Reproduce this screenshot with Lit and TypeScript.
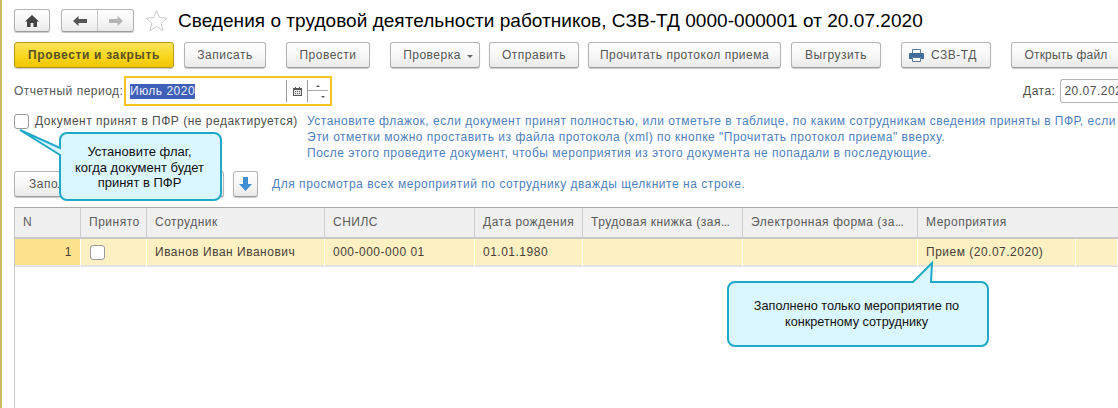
import { LitElement, html, css } from 'lit';
import { customElement } from 'lit/decorators.js';

const columns = [
  { title: 'N', cell: '1' },
  { title: 'Принято', cell: '' },
  { title: 'Сотрудник', cell: 'Иванов Иван Иванович' },
  { title: 'СНИЛС', cell: '000-000-000 01' },
  { title: 'Дата рождения', cell: '01.01.1980' },
  { title: 'Трудовая книжка (зая', more: true, cell: '' },
  { title: 'Электронная форма (за', more: true, cell: '' },
  { title: 'Мероприятия', wide: true, cell: 'Прием (20.07.2020)' },
];

@customElement('app-root')
export class AppRoot extends LitElement {
  static styles = css`
    :host {
      display: block;
      position: relative;
      width: 1118px;
      height: 408px;
      overflow: hidden;
      background: #fff;
      box-sizing: border-box;
      border-left: 2px solid #cdbb6b;
      font-family: 'Liberation Sans', Arial, sans-serif;
      font-size: 12px;
      letter-spacing: 0.5px;
      color: #4f4f4f;
    }
    .page {
      padding: 9px 0 0 12px;
      height: 100%;
      box-sizing: border-box;
      display: flex;
      flex-direction: column;
    }
    .row {
      display: flex;
      align-items: center;
      white-space: nowrap;
    }
    .btn {
      height: 26px;
      box-sizing: border-box;
      flex: none;
      display: flex;
      align-items: center;
      justify-content: center;
      border: 1px solid #b4b4b4;
      border-bottom-color: #9c9c9c;
      border-radius: 3px;
      background: linear-gradient(#ffffff, #f6f6f6 55%, #e9e9e9);
      box-shadow: 0 1px 1px #c8c8c8;
      color: #565656;
    }
    .nav {
      height: 23px;
    }
    .title {
      font-size: 19px;
      letter-spacing: 0.04px;
      color: #000;
      margin-left: 10px;
    }
    .home {
      width: 36px;
    }
    .arrows {
      width: 73px;
      margin-left: 11px;
      padding: 0;
    }
    .arrows span {
      flex: 1;
      height: 100%;
      display: flex;
      align-items: center;
      justify-content: center;
    }
    .arrows span + span {
      border-left: 1px solid #c8c8c8;
    }
    .star {
      margin-left: 11px;
      flex: none;
      display: block;
    }
    .commands {
      margin-top: 10px;
    }
    .primary {
      border-color: #b59a16;
      background: linear-gradient(#fbe35e, #f9d71c 55%, #eec502);
      font-weight: bold;
      letter-spacing: 0.65px;
      color: #5a5024;
    }
    .check-btn {
      padding-left: 6px;
    }
    .print {
      padding-right: 6px;
    }
    .open {
      padding-right: 10px;
      letter-spacing: 0.2px;
    }
    .caret {
      width: 0;
      height: 0;
      margin-left: 6px;
      margin-top: 2px;
      border: 3px solid transparent;
      border-top: 3px solid #666;
      border-bottom: none;
    }
    .period {
      margin-top: 8px;
      height: 30px;
    }
    .period-label {
      width: 110px;
      flex: none;
      color: #575757;
    }
    .frame {
      width: 208px;
      height: 30px;
      flex: none;
      box-sizing: border-box;
      border: 2px solid #f4c51f;
      display: flex;
      align-items: center;
      padding-left: 4px;
    }
    .selected {
      background: #3f60b8;
      color: #e9ecf8;
      width: 65px;
      height: 15px;
      line-height: 15px;
      flex: none;
    }
    .cal {
      margin-left: 91px;
      width: 22px;
      height: 22px;
      box-sizing: border-box;
      border-left: 1px solid #9a9a9a;
      border-right: 1px solid #9a9a9a;
      display: flex;
      align-items: center;
      justify-content: center;
      flex: none;
    }
    .spin {
      width: 20px;
      height: 22px;
      flex: none;
      display: flex;
      flex-direction: column;
      align-items: center;
      justify-content: space-around;
      background: linear-gradient(transparent 10.5px, #aaa 10.5px, #aaa 11.5px, transparent 11.5px);
    }
    .spin i {
      width: 0;
      height: 0;
      border: 2px solid transparent;
    }
    .spin .up {
      border-top: none;
      border-bottom: 2px solid #555;
    }
    .spin .down {
      border-bottom: none;
      border-top: 2px solid #555;
    }
    .date {
      margin-left: 691px;
      flex: none;
    }
    .date-input {
      margin-left: 5px;
      width: 90px;
      height: 24px;
      line-height: 22px;
      flex: none;
      box-sizing: border-box;
      border: 1px solid #b4b4b4;
      border-right: none;
      border-radius: 3px 0 0 3px;
      padding-left: 3px;
    }
    .flag {
      height: 46px;
      align-items: flex-start;
      margin-top: 8px;
    }
    .box {
      width: 15px;
      height: 15px;
      flex: none;
      box-sizing: border-box;
      border: 1px solid #9a9a9a;
      border-radius: 3px;
      background: #fff;
    }
    .flag-label {
      margin-left: 6px;
      width: 272px;
      flex: none;
      line-height: 14px;
    }
    .hint {
      color: #4f81bd;
      line-height: 16px;
      margin-top: -1px;
    }
    .fill-row {
      margin-top: 11px;
    }
    .fill {
      width: 210px;
      justify-content: flex-start;
      padding-left: 14px;
    }
    .down {
      width: 25px;
      margin-left: 9px;
    }
    .fill-hint {
      color: #4f81bd;
      margin-left: 14px;
      letter-spacing: 0.54px;
    }
    .table {
      margin-top: 10px;
      flex: 1;
      border-left: 1px solid #c6c6c6;
      border-top: 1px solid #a8a8a8;
      display: grid;
      grid-template-columns: 66px 66px 178px 150px 108px 160px 175px 158px 1fr;
      grid-template-rows: 31px 28px 1fr;
    }
    .th {
      background: #f0f0f0;
      border-right: 1px solid #cfcfcf;
      border-bottom: 2px solid #c8c8c8;
      padding: 0 0 1px 8px;
      display: flex;
      align-items: center;
      white-space: nowrap;
      overflow: hidden;
      box-sizing: border-box;
      color: #5a5a5a;
    }
    .th.wide {
      grid-column: span 2;
      border-right: none;
    }
    .dots {
      letter-spacing: -0.6px;
    }
    .td {
      background: #fdf0c2;
      border-right: 1px solid #fff;
      border-bottom: 2px solid #e4e4e4;
      padding-left: 8px;
      display: flex;
      align-items: center;
      white-space: nowrap;
      box-sizing: border-box;
      color: #4a4038;
    }
    .td.num {
      background: #fde28d;
      justify-content: flex-end;
      padding-right: 8px;
    }
    .td.check {
      padding-left: 9px;
    }
    .filler {
      grid-column: 1 / -1;
    }
    .callout {
      position: absolute;
      left: 0;
      top: 0;
      display: block;
      overflow: visible;
    }
    .note {
      position: absolute;
      color: #111;
      text-align: center;
      letter-spacing: 0;
    }
    .note-flag {
      left: 56px;
      top: 144px;
      width: 163px;
      font-size: 13px;
      line-height: 15.5px;
    }
    .note-event {
      left: 724px;
      top: 298px;
      width: 261px;
      font-size: 12.7px;
      line-height: 16px;
    }
  `;

  render() {
    return html`
      <div class="page">
        <div class="row nav">
          <div class="btn home nav">
            <svg width="14" height="12" viewBox="0 0 14 12">
              <path d="M7 0 0 6.500h2V12h3.600V8h2.800v4H12V6.500h2z" fill="#444" />
            </svg>
          </div>
          <div class="btn arrows nav">
            <span>
              <svg width="14" height="10" viewBox="0 0 14 10">
                <path d="M0 5 5.500 0v3H14v4H5.500v3z" fill="#555" />
              </svg>
            </span>
            <span>
              <svg width="14" height="10" viewBox="0 0 14 10">
                <path d="M14 5 8.500 0v3H0v4h8.500v3z" fill="#b5b5b5" />
              </svg>
            </span>
          </div>
          <svg class="star" width="23" height="23" viewBox="0 0 23 23">
            <path
              d="M11.500 1.500 14.400 8.600 22 9.200 16.200 14.200 18 21.600 11.500 17.600 5 21.600 6.800 14.200 1 9.200 8.600 8.600z"
              fill="#fff"
              stroke="#c9c9c9"
            />
          </svg>
          <div class="title">Сведения о трудовой деятельности работников, СЗВ-ТД 0000-000001 от 20.07.2020</div>
        </div>

        <div class="row commands">
          <div class="btn primary" style="width:160px">Провести и закрыть</div>
          <div class="btn" style="width:82px;margin-left:10px">Записать</div>
          <div class="btn" style="width:84px;margin-left:20px">Провести</div>
          <div class="btn check-btn" style="width:90px;margin-left:20px">Проверка<i class="caret"></i></div>
          <div class="btn" style="width:90px;margin-left:9px">Отправить</div>
          <div class="btn" style="width:193px;margin-left:9px">Прочитать протокол приема</div>
          <div class="btn" style="width:90px;margin-left:10px">Выгрузить</div>
          <div class="btn print" style="width:90px;margin-left:20px">
            <svg width="15" height="13" viewBox="0 0 15 13" style="margin-right:7px">
              <path d="M3.500 .5h8v4h-8z" fill="#fff" stroke="#55779a" />
              <path d="M1 4h13a1 1 0 0 1 1 1v5h-3V8H3v2H0V5a1 1 0 0 1 1-1z" fill="#3f6d9c" />
              <path d="M3.500 8.500h8v4h-8z" fill="#fff" stroke="#55779a" />
            </svg>
            СЗВ-ТД
          </div>
          <div class="btn open" style="width:120px;margin-left:20px">Открыть файл</div>
        </div>

        <div class="row period">
          <div class="period-label">Отчетный период:</div>
          <div class="frame">
            <div class="selected">Июль 2020</div>
            <div class="cal">
              <svg width="9" height="9" viewBox="0 0 9 9">
                <path d="M0 1h9v8H0z" fill="#555" />
                <path d="M1 3h7v5H1z" fill="#e6e6e6" />
                <path d="M2 4h1v1H2zM4 4h1v1H4zM6 4h1v1H6zM2 6h1v1H2zM4 6h1v1H4zM6 6h1v1H6z" fill="#555" />
                <path d="M2 0h1v2H2zM6 0h1v2H6z" fill="#555" />
              </svg>
            </div>
            <div class="spin"><i class="up"></i><i class="down"></i></div>
          </div>
          <div class="date">Дата:</div>
          <div class="date-input">20.07.2020</div>
        </div>

        <div class="row flag">
          <div class="box"></div>
          <div class="flag-label">Документ принят в ПФР (не редактируется)</div>
          <div class="hint">
            Установите флажок, если документ принят полностью, или отметьте в таблице, по каким сотрудникам сведения приняты в ПФР, если документ принят частично.<br />
            Эти отметки можно проставить из файла протокола (xml) по кнопке "Прочитать протокол приема" вверху.<br />
            После этого проведите документ, чтобы мероприятия из этого документа не попадали в последующие.
          </div>
        </div>

        <div class="row fill-row">
          <div class="btn fill">Заполнить</div>
          <div class="btn down">
            <svg width="13" height="14" viewBox="0 0 13 14">
              <path d="M4 0h5v7h4l-6.500 7L0 7h4z" fill="#3f8fd2" />
            </svg>
          </div>
          <div class="fill-hint">Для просмотра всех мероприятий по сотруднику дважды щелкните на строке.</div>
        </div>

        <div class="table">
          ${columns.map(
            (c) => html`<div class="th ${c.wide ? 'wide' : ''}">
              <span>${c.title}${c.more ? html`<span class="dots">...</span>` : ''}</span>
            </div>`
          )}
          ${columns.map((c, i) =>
            i === 1
              ? html`<div class="td check"><div class="box"></div></div>`
              : html`<div class="td ${i === 0 ? 'num' : ''}">${c.cell}</div>`
          )}
          <div class="td"></div>
          <div class="filler"></div>
        </div>
      </div>

      <svg class="callout" width="1116" height="408" viewBox="0 0 1116 408">
        <path
          d="M65 133H212a7 7 0 0 1 7 7V193a7 7 0 0 1-7 7H65a7 7 0 0 1-7-7V155L18 130 58 148V140a7 7 0 0 1 7-7z"
          fill="#daf6fe"
          stroke="#1fa9c6"
          stroke-width="2"
        />
        <path
          d="M733 282H911L930 263 929 282H979a7 7 0 0 1 7 7V339a7 7 0 0 1-7 7H733a7 7 0 0 1-7-7V289a7 7 0 0 1 7-7z"
          fill="#daf6fe"
          stroke="#1fa9c6"
          stroke-width="2"
        />
      </svg>
      <div class="note note-flag">Установите флаг,<br />когда документ будет<br />принят в ПФР</div>
      <div class="note note-event">Заполнено только мероприятие по<br />конкретному сотруднику</div>
    `;
  }
}
